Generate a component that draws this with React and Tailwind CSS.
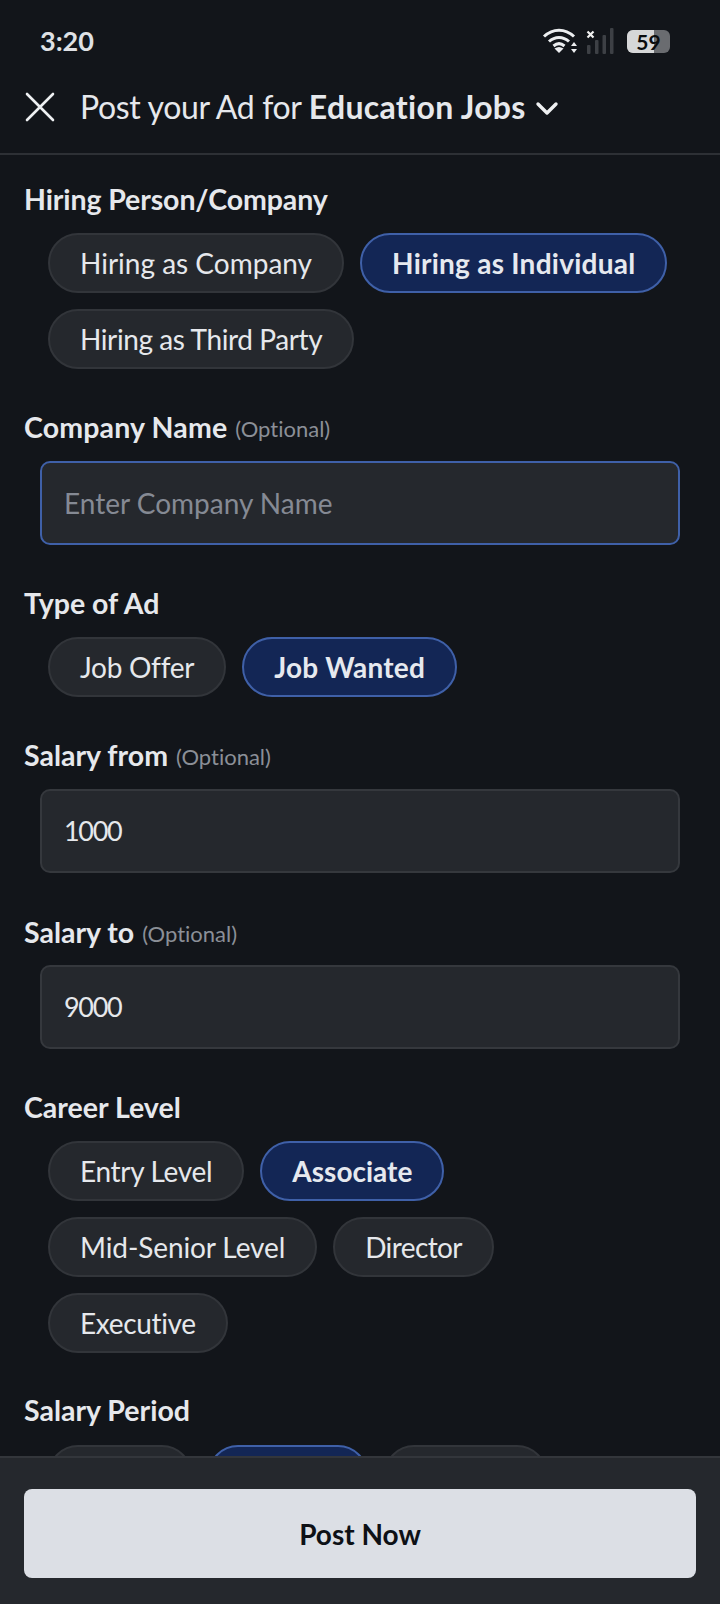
import React from "react";

const font = { fontFamily: '"Lato", "Open Sans", sans-serif' };

function Chip({ children, on, w, t }) {
  return (
    <div
      className={`h-[60px] px-[30px] flex items-center justify-center rounded-full border-2 text-[28px] whitespace-nowrap ${w || ""} ${t || ""} ${
        on
          ? "bg-[#132655] border-[#3f60a8] font-bold text-[#e6e9ef]"
          : "bg-[#25282d] border-[#32353a] text-[#e6e8ec]"
      }`}
    >
      {children}
    </div>
  );
}

function Label({ children, opt, t }) {
  return (
    <div className="h-[36px] flex items-center px-6 text-[#e6e8ec]">
      <span className={`text-[28.500px] font-bold ${t || ""}`}>{children}</span>
      {opt && <span className="ml-2 text-[22px] text-[#8b8f97] pt-[3px]">(Optional)</span>}
    </div>
  );
}

function Field({ value, focus, placeholder }) {
  return (
    <div
      className={`mx-10 h-[84px] rounded-[10px] border-2 bg-[#25282d] flex items-center px-[22px] ${
        focus ? "border-[#3f60a8]" : "border-[#35383d]"
      } ${placeholder ? "text-[28px] text-[#858a94]" : "text-[27px] tracking-[-1.300px] text-[#e6e8ec]"}`}
    >
      {value || placeholder}
    </div>
  );
}

export default function App() {
  return (
    <div style={font} className="w-[720px] h-[1604px] flex flex-col bg-[#12151a] overflow-hidden [font-variant-ligatures:none]">
      {/* status bar */}
      <div className="h-[62px] shrink-0 pt-[20px] flex items-center justify-between pl-10 pr-[50px]">
        <span className="text-[27px] font-bold text-[#dfe1e5]">3:20</span>
        <div className="flex items-center">
          <svg width="36" height="28" viewBox="0 0 36 28" fill="none">
            <path d="M2 9.500C11 1 23 1 32 9.500" stroke="#eceef0" strokeWidth="3" />
            <path d="M7 14.500C13 9 21 9 27 14.500" stroke="#eceef0" strokeWidth="3" />
            <path d="M11.500 19C15 16 19 16 22.500 19" stroke="#eceef0" strokeWidth="3" />
            <path d="M17 26l-4.500-4.500Q17 18.500 21.500 21.500z" fill="#eceef0" />
            <path d="M29 19l3-4 3 4zM29 22h6l-3 4z" fill="#eceef0" />
          </svg>
          <svg className="ml-2" width="28" height="26" viewBox="0 0 28 26">
            <path d="M1.500 3.500l6 6M7.500 3.500l-6 6" stroke="#f0f0f0" strokeWidth="2.200" />
            <rect x="1" y="17" width="3.500" height="9" rx="1" fill="#3d4045" />
            <rect x="9" y="12" width="3.500" height="14" rx="1" fill="#3d4045" />
            <rect x="16.500" y="7" width="3.500" height="19" rx="1" fill="#3d4045" />
            <rect x="24" y="0" width="3.500" height="26" rx="1" fill="#3d4045" />
          </svg>
          <div className="ml-[13px] relative w-[43px] h-[23px] rounded-[6px] bg-[#6a6c70] flex">
            <div className="w-[27px] rounded-l-[6px] bg-[#d6d7d8]" />
            <span className="absolute inset-0 flex items-center justify-center text-[21px] leading-none font-bold text-[#0a0c0e]">59</span>
          </div>
        </div>
      </div>

      {/* header */}
      <div className="h-[93px] shrink-0 flex items-center border-b-2 border-[#2d3035] pl-[24px] pb-[1px]">
        <svg width="32" height="32" viewBox="0 0 32 32" fill="none" stroke="#eef0f2" strokeWidth="2.600" strokeLinecap="round">
          <path d="M3 3l26 26M29 3L3 29" />
        </svg>
        <span className="ml-[24px] text-[32px] text-[#e6e8ec] whitespace-nowrap tracking-[-0.350px]">
          Post your Ad for <b className="font-bold tracking-[0.300px]">Education Jobs</b>
        </span>
        <svg className="ml-[9px] mt-1" width="24" height="16" viewBox="0 0 24 16" fill="none" stroke="#eef0f2" strokeWidth="3.400" strokeLinecap="round" strokeLinejoin="round">
          <path d="M3 3l9 9 9-9" />
        </svg>
      </div>

      {/* form */}
      <div className="flex-1 min-h-0 overflow-hidden pt-[26px]">
        <Label t="tracking-[-0.100px]">Hiring Person/Company</Label>
        <div className="flex flex-wrap gap-4 px-12 mt-[16px]">
          <Chip>Hiring as Company</Chip>
          <Chip on t="tracking-[0.250px]">Hiring as Individual</Chip>
          <Chip t="tracking-[-0.400px]">Hiring as Third Party</Chip>
        </div>

        <div className="mt-[40px]">
          <Label opt t="tracking-[0.150px]">Company Name</Label>
        </div>
        <div className="mt-[16px]">
          <Field focus placeholder="Enter Company Name" />
        </div>

        <div className="mt-[40px]">
          <Label>Type of Ad</Label>
        </div>
        <div className="flex flex-wrap gap-4 px-12 mt-[16px]">
          <Chip t="tracking-[-0.250px]">Job Offer</Chip>
          <Chip on t="tracking-[0.200px]">Job Wanted</Chip>
        </div>

        <div className="mt-[40px]">
          <Label opt>Salary from</Label>
        </div>
        <div className="mt-[16px]">
          <Field value="1000" />
        </div>

        <div className="mt-[41px]">
          <Label opt>Salary to</Label>
        </div>
        <div className="mt-[15px]">
          <Field value="9000" />
        </div>

        <div className="mt-[40px]">
          <Label>Career Level</Label>
        </div>
        <div className="flex flex-wrap gap-4 px-12 mt-[16px]">
          <Chip t="tracking-[-0.300px]">Entry Level</Chip>
          <Chip on>Associate</Chip>
          <Chip t="tracking-[-0.100px]">Mid-Senior Level</Chip>
          <Chip t="tracking-[-0.600px]">Director</Chip>
          <Chip t="tracking-[-0.350px]">Executive</Chip>
        </div>

        <div className="mt-[39px]">
          <Label>Salary Period</Label>
        </div>
        <div className="flex gap-4 px-12 mt-[17px]">
          <Chip w="w-[144px]" />
          <Chip on w="w-[160px]" />
          <Chip w="w-[163px]" />
        </div>
      </div>

      {/* footer */}
      <div className="h-[148px] shrink-0 bg-[#25282d] border-t-2 border-[#33363b] px-6 pt-[31px]">
        <div className="h-[89px] rounded-[8px] bg-[#dcdfe5] flex items-center justify-center text-[28px] font-bold text-[#0e1116]">
          Post Now
        </div>
      </div>
    </div>
  );
}
